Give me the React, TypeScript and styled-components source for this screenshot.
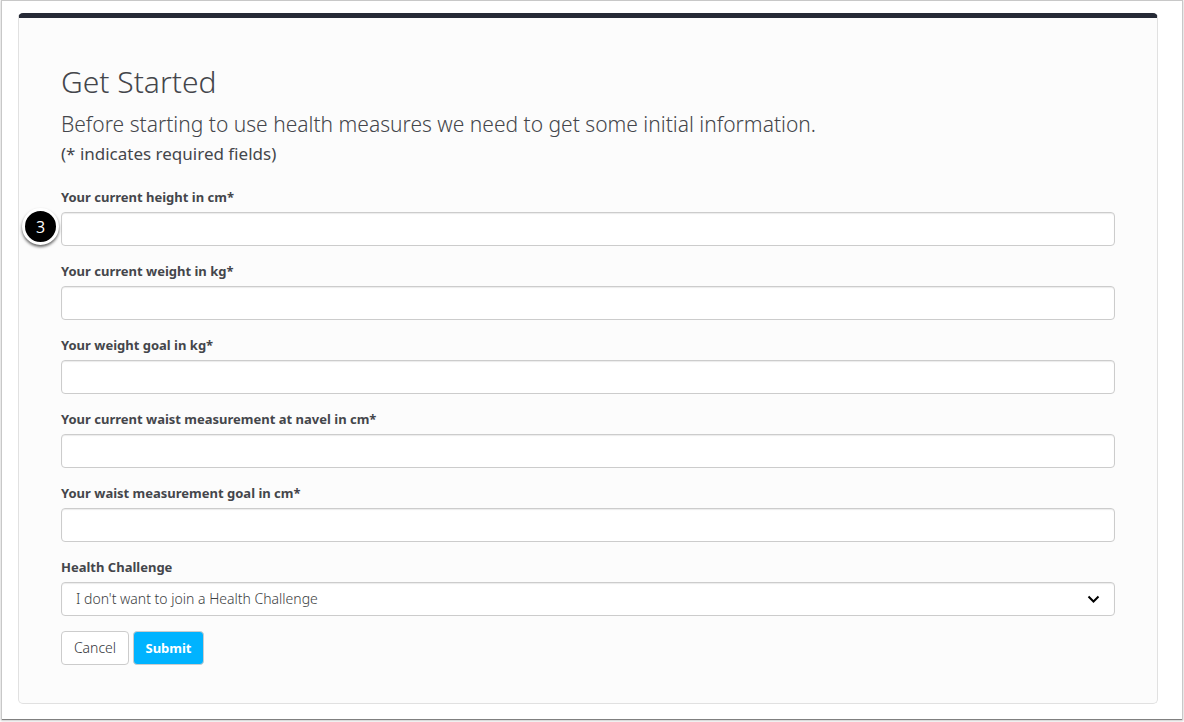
import React from "react";
import styled, { createGlobalStyle } from "styled-components";

const GlobalStyle = createGlobalStyle`
  *, *::before, *::after { box-sizing: border-box; }
  body {
    margin: 0;
    background: #fff;
    color: #44464b;
    font: 13px/20px "Noto Sans", "Open Sans", sans-serif;
  }
`;

const Page = styled.div`
  padding: 1px 2px 3px;
`;

const Frame = styled.main`
  padding: 12px 24px 15px 16px;
  background: #fff;
  box-shadow: 0 1px 0 #808080, 0 0 1px 1px #c8c8c8, 0 1px 2px 1px #d0d0d0;
`;

const Panel = styled.form`
  padding: 47px 42px 38px;
  background: #fcfcfc;
  border: 1px solid #e1e1e1;
  border-top: 5px solid #262a36;
  border-radius: 5px;
`;

const Title = styled.h1`
  margin: 0 0 10px;
  font-size: 30px;
  line-height: 33px;
  font-weight: 300;
`;

const Lead = styled.p`
  margin: 0 0 2px;
  font-size: 21px;
  line-height: 32px;
  font-weight: 300;
`;

const Note = styled.p`
  margin: 0 0 22px;
  font-size: 17px;
  line-height: 23px;
`;

const Field = styled.div`
  position: relative;
  display: flex;
  flex-direction: column;
  gap: 5px;
  margin-bottom: 15px;
`;

const Label = styled.label`
  font-weight: 700;
`;

const controlStyle = `
  width: 100%;
  height: 34px;
  margin: 0;
  padding: 6px 14px;
  background: #fff;
  border: 1px solid #ccc;
  border-radius: 4px;
  box-shadow: inset 0 1px 1px rgba(0, 0, 0, 0.08);
  color: #3c3e42;
  font: inherit;
  font-size: 14px;
  font-weight: 300;
`;

const Input = styled.input`
  ${controlStyle}
`;

const Select = styled.select`
  ${controlStyle}
  appearance: none;
`;

const SelectBox = styled.div`
  position: relative;
`;

const Chevron = styled.svg`
  position: absolute;
  top: 12px;
  right: 15px;
  width: 13px;
  height: 10px;
  pointer-events: none;
`;

const Step = styled.span`
  position: absolute;
  top: 21px;
  left: -39px;
  display: grid;
  place-items: center;
  width: 37px;
  height: 37px;
  border: 3px solid #fff;
  border-radius: 50%;
  background: #000;
  box-shadow: 0 2px 3px rgba(0, 0, 0, 0.6);
  color: #fff;
  font-family: "Open Sans", sans-serif;
  font-size: 16px;
`;

const Actions = styled.div`
  display: flex;
  gap: 4px;
`;

const Button = styled.button<{ $primary?: boolean }>`
  min-width: ${(p) => (p.$primary ? 71 : 68)}px;
  height: 34px;
  padding: 0 11px;
  border: 1px solid #ccc;
  border-radius: 4px;
  background: ${(p) => (p.$primary ? "#00b3ff" : "#fff")};
  color: ${(p) => (p.$primary ? "#fff" : "#333539")};
  font: inherit;
  font-size: ${(p) => (p.$primary ? 13 : 14)}px;
  font-weight: ${(p) => (p.$primary ? 700 : 300)};
`;

const measures = [
  { id: "height", label: "Your current height in cm*", step: 3 },
  { id: "weight", label: "Your current weight in kg*" },
  { id: "weight-goal", label: "Your weight goal in kg*" },
  { id: "waist", label: "Your current waist measurement at navel in cm*" },
  { id: "waist-goal", label: "Your waist measurement goal in cm*" },
];

export default function App() {
  return (
    <Page>
      <GlobalStyle />
      <Frame>
        <Panel>
          <Title>Get Started</Title>
          <Lead>Before starting to use health measures we need to get some initial information.</Lead>
          <Note>(* indicates required fields)</Note>
          {measures.map((m) => (
            <Field key={m.id}>
              <Label htmlFor={m.id}>{m.label}</Label>
              <Input id={m.id} type="text" required />
              {m.step && <Step>{m.step}</Step>}
            </Field>
          ))}
          <Field>
            <Label htmlFor="challenge">Health Challenge</Label>
            <SelectBox>
              <Select id="challenge">
                <option>I don't want to join a Health Challenge</option>
              </Select>
              <Chevron viewBox="0 0 13 10" aria-hidden="true">
                <path d="M1.5 2.5 L6.5 7.5 L11.5 2.5" fill="none" stroke="#000" strokeWidth="2" />
              </Chevron>
            </SelectBox>
          </Field>
          <Actions>
            <Button type="button">Cancel</Button>
            <Button type="submit" $primary>Submit</Button>
          </Actions>
        </Panel>
      </Frame>
    </Page>
  );
}
